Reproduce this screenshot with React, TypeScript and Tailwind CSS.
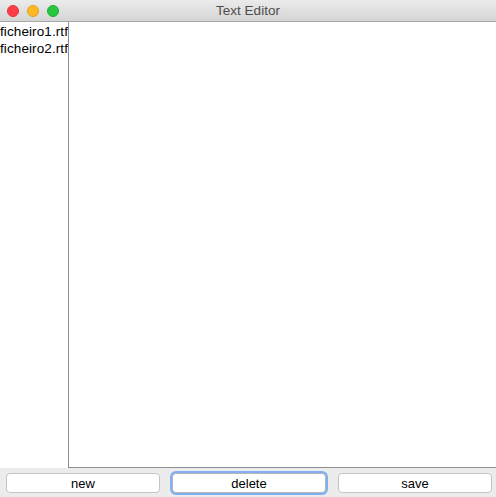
import { useState } from "react";

const FILES = ["ficheiro1.rtf", "ficheiro2.rtf"];

export default function App() {
  const [text, setText] = useState("");

  return (
    <div className="w-[496px] h-[497px] flex flex-col bg-[#ececec] font-['Liberation_Sans',Arial,sans-serif] text-[13px] text-black overflow-hidden">
      {/* barra de título */}
      <div className="relative h-[22px] shrink-0 flex items-center bg-gradient-to-b from-[#ebebeb] to-[#d5d5d5] border-b border-[#a8a8a8]">
        <div className="flex items-center gap-[8px] pl-[7px]">
          <span className="w-[12px] h-[12px] rounded-full bg-[#fc3d45] border border-[#e2353c]" />
          <span className="w-[12px] h-[12px] rounded-full bg-[#fdb826] border border-[#e0a021]" />
          <span className="w-[12px] h-[12px] rounded-full bg-[#28c73f] border border-[#1fae35]" />
        </div>
        <span className="absolute inset-x-0 text-center text-[#4d4d4d] text-[13.5px] leading-[22px]">
          Text Editor
        </span>
      </div>

      {/* conteúdo */}
      <div className="flex flex-1 min-h-0 bg-white">
        <ul className="w-[68px] shrink-0 pt-[1px] text-[13.5px] tracking-[0.1px]">
          {FILES.map((f) => (
            <li key={f} className="h-[17px] leading-[17px] whitespace-nowrap">
              {f}
            </li>
          ))}
        </ul>
        <textarea
          className="flex-1 resize-none outline-none border-l border-b border-[#8e8e8e] p-1"
          value={text}
          onChange={(e) => setText(e.target.value)}
        />
      </div>

      {/* botões */}
      <div className="h-[29px] shrink-0 flex gap-[12px] pl-[6px] pr-[4px] pt-[5px] bg-[#ececec]">
        <button className="flex-1 h-[20px] rounded-[4px] bg-white border border-[#c4c4c4] leading-none">
          new
        </button>
        <button className="flex-1 h-[20px] rounded-[4px] bg-white border border-[#b6b6b6] ring-2 ring-[#7fb0f2] leading-none">
          delete
        </button>
        <button className="flex-1 h-[20px] rounded-[4px] bg-white border border-[#c4c4c4] leading-none">
          save
        </button>
      </div>
    </div>
  );
}
